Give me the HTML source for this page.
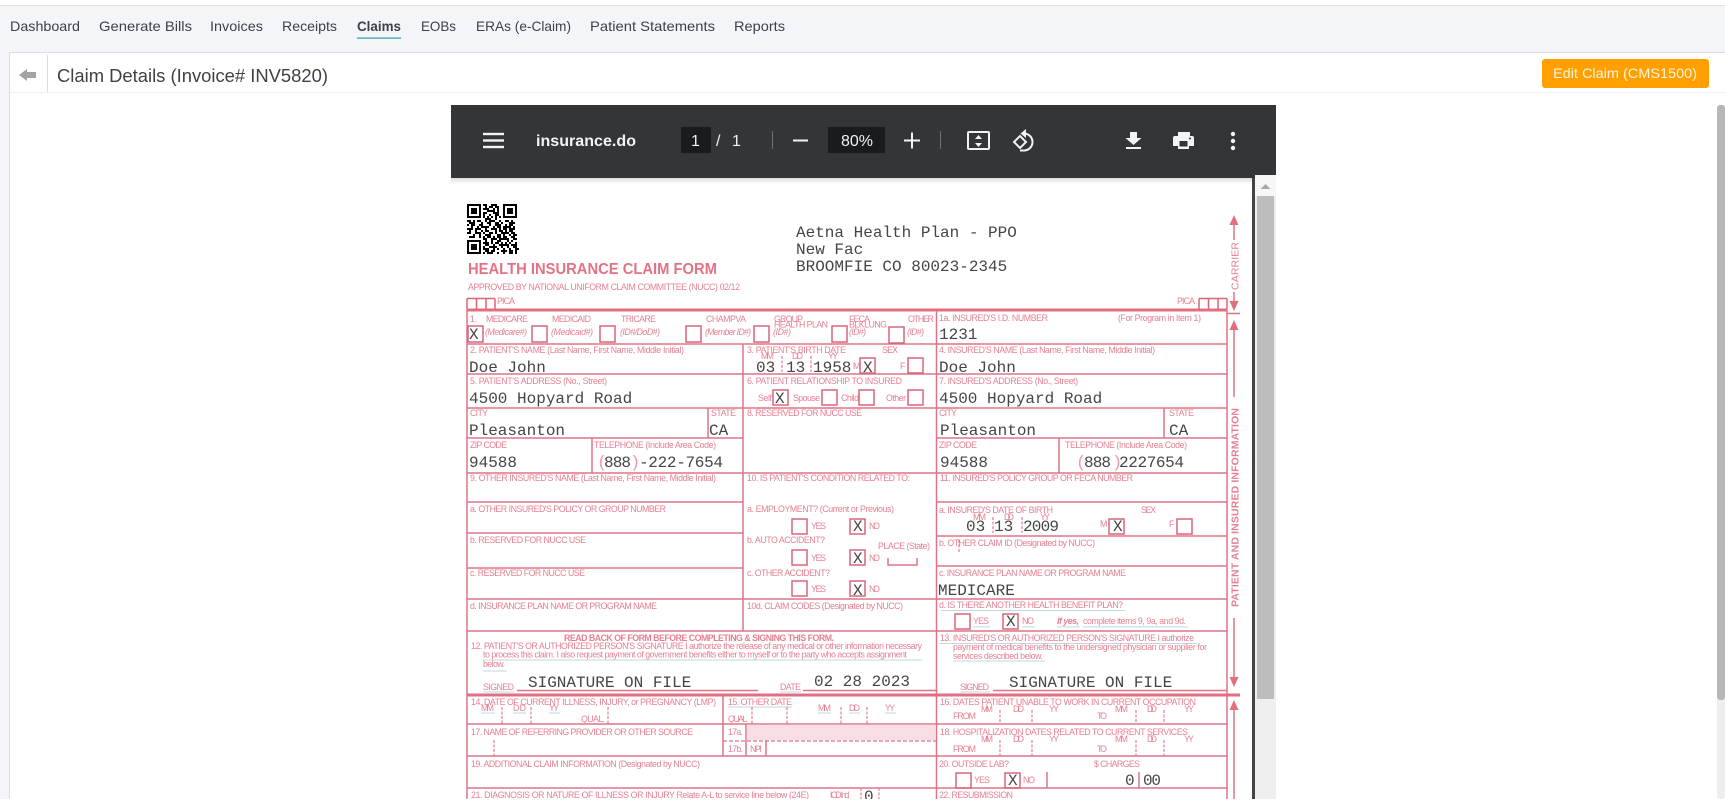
<!DOCTYPE html>
<html lang="en"><head><meta charset="utf-8"><title>Claim Details</title>
<style>
html,body{margin:0;padding:0;background:#fff;width:1725px;height:803px;overflow:hidden}
svg{display:block;position:absolute;left:0;top:0}
.nav text{font:14px "Liberation Sans",sans-serif;fill:#3d4248}
.l text{font:8.8px "Liberation Sans",sans-serif;fill:#e68092}
.t text{font:16px "Liberation Mono",monospace;fill:#454545}
.tb text{font:16px "Liberation Sans",sans-serif;fill:#f1f3f4}
</style></head><body>
<svg width="1725" height="803" viewBox="0 0 1725 803" xmlns="http://www.w3.org/2000/svg">
<defs>
<clipPath id="c"><rect x="440" y="178" width="812" height="621"/></clipPath>
<linearGradient id="sh" x1="0" y1="0" x2="0" y2="1"><stop offset="0" stop-color="#dcdcdc"/><stop offset="1" stop-color="#fff"/></linearGradient>
</defs>
<rect width="1725" height="803" fill="#fff"/>
<rect y="5" width="1725" height="794" fill="#f4f5f9"/>
<rect y="5" width="1725" height="1" fill="#e3e3e3"/>
<g class="nav">
<text x="10" y="31" textLength="70" lengthAdjust="spacingAndGlyphs">Dashboard</text>
<text x="99" y="31" textLength="93" lengthAdjust="spacingAndGlyphs">Generate Bills</text>
<text x="210" y="31" textLength="53" lengthAdjust="spacingAndGlyphs">Invoices</text>
<text x="282" y="31" textLength="55" lengthAdjust="spacingAndGlyphs">Receipts</text>
<text x="357" y="31" textLength="44" lengthAdjust="spacingAndGlyphs" style="font-weight:bold">Claims</text>
<text x="421" y="31" textLength="35" lengthAdjust="spacingAndGlyphs">EOBs</text>
<text x="476" y="31" textLength="95" lengthAdjust="spacingAndGlyphs">ERAs (e-Claim)</text>
<text x="590" y="31" textLength="125" lengthAdjust="spacingAndGlyphs">Patient Statements</text>
<text x="734" y="31" textLength="51" lengthAdjust="spacingAndGlyphs">Reports</text>
</g>
<rect x="357" y="37.5" width="44" height="1.2" fill="#2a9aa5"/>
<!-- card -->
<rect x="9" y="52" width="1716" height="747" fill="#fff"/>
<path d="M9.500 799V52.500H1725" fill="none" stroke="#dedede"/>
<rect x="10" y="92" width="1715" height="1" fill="#efefef"/>
<rect x="47" y="55" width="1" height="37" fill="#dedede"/>
<path d="M19 75l8-6v3h9v6h-9v3z" fill="#a3a3a3"/>
<text x="57" y="82" textLength="271" lengthAdjust="spacingAndGlyphs" style="font:18px 'Liberation Sans',sans-serif;fill:#3d4248">Claim Details (Invoice# INV5820)</text>
<rect x="1542" y="59" width="167" height="29" rx="3" fill="#ffa000"/>
<text x="1553" y="78" textLength="144" lengthAdjust="spacingAndGlyphs" style="font:14px 'Liberation Sans',sans-serif;fill:#fff4dc">Edit Claim (CMS1500)</text>
<!-- outer scrollbar -->
<rect x="1717" y="105" width="8" height="694" rx="3" fill="#eeeeee"/>
<rect x="1717" y="105" width="8" height="595" rx="3" fill="#b7b7b7"/>
<!-- toolbar -->
<rect x="451" y="105" width="825" height="73" fill="#323639"/>
<rect x="451" y="178" width="801" height="6" fill="url(#sh)"/>
<g fill="#f1f3f4">
<rect x="483" y="132.800" width="21" height="2.400"/><rect x="483" y="139.300" width="21" height="2.400"/><rect x="483" y="145.800" width="21" height="2.400"/>
<rect x="793" y="139.500" width="15" height="2"/>
<rect x="904" y="139.500" width="16" height="2"/><rect x="911" y="132.500" width="2" height="16"/>
</g>
<g class="tb">
<text x="536" y="146" textLength="100" style="font-weight:bold">insurance.do</text>
<rect x="681" y="127" width="30" height="26" fill="#191b1c"/>
<text x="691" y="146">1</text>
<text x="716" y="146">/</text>
<text x="732" y="146">1</text>
<rect x="828" y="127" width="57" height="26" fill="#191b1c"/>
<text x="841" y="146" textLength="32">80%</text>
</g>
<rect x="772" y="131" width="1" height="18" fill="#6d7073"/>
<rect x="940" y="131" width="1" height="18" fill="#6d7073"/>
<g fill="none" stroke="#f1f3f4" stroke-width="2">
<rect x="968" y="132" width="21" height="17" rx="1"/>
<path d="M1014 142l6-6 6 6-6 6z"/>
<path d="M1024 133.500A8.500 8.500 0 0 1 1024 150.500H1020"/>
</g>
<g fill="#f1f3f4">
<path d="M975 139l3.500-4 3.500 4zM975 143l3.500 4 3.500-4z"/>
<path d="M1026 129v9l-5.500-4.500z"/>
<path d="M1130 132h7v6h4.500l-8 7-8-7h4.500z"/>
<rect x="1126" y="147" width="15" height="2"/>
<path d="M1178 132h12v4h-12zM1176 136h16a2 2 0 0 1 2 2v8h-5v3h-11v-3h-5v-8a2 2 0 0 1 2-2z"/>
<circle cx="1233" cy="134" r="2.200"/><circle cx="1233" cy="141" r="2.200"/><circle cx="1233" cy="148" r="2.200"/>
</g>
<rect x="1179.500" y="141" width="8" height="5.500" fill="#323639"/>
<circle cx="1190" cy="138.500" r="1" fill="#323639"/>
<!-- pdf scrollbars -->
<rect x="1252" y="178" width="3" height="621" fill="#444"/>
<rect x="1255" y="175" width="21" height="624" fill="#efefef"/>
<rect x="1255" y="175" width="21" height="21" fill="#f7f7f7"/>
<path d="M1260.500 189l5-5 5 5z" fill="#a8a8a8"/>
<rect x="1257" y="196" width="17" height="503" fill="#bdbdbd"/>
<rect x="451" y="184" width="801" height="615" fill="#fff"/>
<!-- form -->
<g clip-path="url(#c)">
<!-- QR -->
<g transform="translate(467,204) scale(2)" fill="none" stroke="#000" stroke-width="1" shape-rendering="crispEdges">
<path d="M.5.5h6v6h-6zM18.500.5h6v6h-6zM.5 18.500h6v6h-6z"/>
<path d="M2 3.500h3M2 2.500h3M2 4.500h3M20 2.500h3M20 3.500h3M20 4.500h3M2 20.500h3M2 21.500h3M2 22.500h3"/>
<path d="M8 .5h2m2 0h3M9 1.500h1m1 0h2m1 0h2M8 2.500h3m2 0h1m1 0h1M10 3.500h4m1 0h1M8 4.500h2m3 0h3M8 5.500h1m2 0h1m2 0h2M8 6.500h1m1 0h1m1 0h1m1 0h1m1 0h1M9 7.500h3m2 0h1"/>
<path d="M0 8.500h2m1 0h1m1 0h2m2 0h1m1 0h3m2 0h1m2 0h2m1 0h1M1 9.500h3m3 0h1m2 0h2m2 0h2m1 0h1m3 0h3M0 10.500h1m1 0h2m2 0h2m3 0h1m2 0h3m2 0h1m1 0h2M2 11.500h1m2 0h1m1 0h4m2 0h1m1 0h2m1 0h4m1 0h1M0 12.500h3m1 0h3m2 0h1m2 0h3m1 0h1m1 0h2m1 0h3M1 13.500h1m2 0h1m2 0h1m1 0h2m3 0h1m1 0h2m1 0h1m1 0h2M0 14.500h2m2 0h3m1 0h1m2 0h2m1 0h1m2 0h4m1 0h2M3 15.500h1m2 0h1m2 0h3m3 0h2m1 0h1m2 0h1m1 0h2M1 16.500h3m2 0h1m1 0h1m1 0h2m1 0h1m1 0h2m1 0h2m2 0h2"/>
<path d="M8 17.500h2m2 0h3m1 0h5m2 0h2M9 18.500h1m2 0h1m2 0h2m3 0h1m1 0h1M8 19.500h3m1 0h1m1 0h2m1 0h1m1 0h1m1 0h1m2 0h1M9 20.500h2m2 0h1m2 0h5m1 0h3M8 21.500h1m2 0h4m2 0h1m2 0h1m2 0h2M8 22.500h3m2 0h1m1 0h1m2 0h1m2 0h1m2 0h2M9 23.500h2m1 0h2m3 0h3m1 0h2m1 0h1M8 24.500h1m1 0h3m2 0h1m2 0h1m2 0h2m1 0h1"/>
</g>
<text x="468" y="274" textLength="249" lengthAdjust="spacingAndGlyphs" style="font:bold 15.500px 'Liberation Sans',sans-serif;fill:#e37284">HEALTH INSURANCE CLAIM FORM</text>
<!-- light underlines -->
<g stroke="#a9cbd8" stroke-width=".8" fill="none">
<path d="M483 660H922M483 671H507M483 692H514M780 692H801M941 610.500H1125M973 627H990M1022 627H1035M1057 627H1080M1083 627H1188M940 643.500H1197M953 661H1045M960 692H990M481 713H495M513 713H526M549 713H560M728 707H792M818 713H831M849 713H860M885 713H896"/>
</g>
<!-- lines -->
<g stroke="#de7587" stroke-width="1.500" fill="none">
<path d="M467 310V799M1227 310V799"/>
<path d="M743 344V631M936.500 310V799"/>
<path d="M467 344H1227M467 374H1227M467 408H1227M467 438H743M936 438H1227M467 473H1227"/>
<path d="M467 502H743M936 502H1227M467 533H743M936 536H1227M467 568H743M936 566H1227M467 599H1227M467 631H1227"/>
<path d="M467 724H1227M467 756H1227M467 788H1227"/>
<path d="M708 408V438M592 438V473M1164 408V438M1059 438V473"/>
<path d="M723 695V756M746 724V756M766 724V756"/>
<path d="M1047 772V788M1139 772V788M888 558V565H917V558"/>
<path d="M517 690.500H758M803 690.500H936M993 690.500H1227"/>
</g>
<path d="M467 310H1227M467 695H1240" stroke="#e16f80" stroke-width="3" fill="none"/>
<rect x="746.800" y="724.800" width="189" height="15.300" fill="#f9dde4"/>
<path d="M723 741H936" stroke="#de7587" stroke-width="1.300" stroke-dasharray="4 2" fill="none"/>
<path d="M782 356V372M811 356V372M993 517V533M1022 517V533M502 707V724M531 707V724M608 707V724M752 707V724M787 707V724M841 707V724M867 707V724M1000 710V723M1032 710V723M1136 710V723M1164 710V723M1000 740V756M1032 740V756M1136 740V756M1164 740V756M494 740V756M959 540V552M861 788V799M879 788V799" stroke="#de7587" stroke-width="1.100" stroke-dasharray="3 1.500" fill="none"/>
<!-- boxes -->
<g stroke="#d8657a" stroke-width="1.500" fill="none">
<path d="M467 298.500h28M467 298.500v11M476.500 298.500v11M486 298.500v11M495 298.500v11M1199 298.500h28M1199 298.500v11M1208.500 298.500v11M1218 298.500v11M1227 298.500v11"/>
<rect x="468" y="326" width="15" height="16"/><rect x="532" y="326" width="15" height="16"/><rect x="600" y="326" width="15" height="16"/><rect x="686" y="326" width="15" height="16"/><rect x="754" y="326" width="15" height="16"/><rect x="832" y="326" width="15" height="16"/><rect x="889" y="327" width="15" height="16"/>
<rect x="860" y="358" width="15" height="15"/><rect x="908" y="358" width="15" height="15"/>
<rect x="773" y="390" width="15" height="15"/><rect x="822" y="390" width="15" height="15"/><rect x="859" y="390" width="15" height="15"/><rect x="908" y="390" width="15" height="15"/>
<rect x="792" y="519" width="15" height="15"/><rect x="850" y="519" width="15" height="15"/>
<rect x="792" y="550" width="15" height="15"/><rect x="850" y="550" width="15" height="15"/>
<rect x="792" y="581" width="15" height="15"/><rect x="850" y="581" width="15" height="15"/>
<rect x="1109" y="519" width="15" height="15"/><rect x="1177" y="519" width="15" height="15"/>
<rect x="955" y="614" width="15" height="15"/><rect x="1003" y="614" width="15" height="15"/>
<rect x="956" y="773" width="15" height="15"/><rect x="1005" y="773" width="15" height="15"/>
</g>
<!-- side arrows -->
<g stroke="#de7587" stroke-width="1.500" fill="none">
<path d="M1234 220V240M1234 292V306M1234 325V397M1234 618V682M1234 705V799M1227 313.500H1240"/>
</g>
<g fill="#e16f80">
<path d="M1234 215l4.500 10h-9zM1234 311l4.500-10h-9zM1234 320l4.500 10h-9zM1234 687l4.500-10h-9zM1234 700l4.500 10h-9z"/>
</g>
<g class="l">
<text transform="translate(1238.500,290) rotate(-90)" textLength="48" style="font-size:10.500px">CARRIER</text>
<text transform="translate(1238.500,607) rotate(-90)" textLength="199" style="font-size:10.500px;font-weight:bold">PATIENT AND INSURED INFORMATION</text>
<text x="468" y="290" textLength="272">APPROVED BY NATIONAL UNIFORM CLAIM COMMITTEE (NUCC) 02/12</text>
<text x="497" y="304" textLength="18">PICA</text><text x="1177" y="304" textLength="18">PICA</text>
<text x="470" y="322">1.</text><text x="486" y="322" textLength="42">MEDICARE</text><text x="552" y="322" textLength="39">MEDICAID</text><text x="621" y="322" textLength="35">TRICARE</text><text x="706" y="322" textLength="40">CHAMPVA</text><text x="774" y="322" textLength="29">GROUP</text><text x="774" y="327.500" textLength="54">HEALTH PLAN</text><text x="849" y="322" textLength="21">FECA</text><text x="849" y="327.500" textLength="38">BLKLUNG</text><text x="908" y="322" textLength="26">OTHER</text>
<g font-style="italic">
<text x="485" y="335" textLength="42" style="font-style:italic">(Medicare#)</text><text x="551" y="335" textLength="42" style="font-style:italic">(Medicaid#)</text><text x="620" y="335" textLength="40" style="font-style:italic">(ID#/DoD#)</text><text x="705" y="335" textLength="46" style="font-style:italic">(Member ID#)</text><text x="773" y="335" textLength="18" style="font-style:italic">(ID#)</text><text x="849" y="335" textLength="17" style="font-style:italic">(ID#)</text><text x="907" y="335" textLength="17" style="font-style:italic">(ID#)</text>
</g>
<text x="939" y="321" textLength="109">1a. INSURED'S I.D. NUMBER</text><text x="1118" y="321" textLength="83">(For Program in Item 1)</text>
<text x="470" y="353" textLength="214">2. PATIENT'S NAME (Last Name, First Name, Middle Initial)</text>
<text x="747" y="353" textLength="99">3. PATIENT'S BIRTH DATE</text><text x="882" y="353" textLength="16">SEX</text>
<text x="761" y="359" textLength="13">MM</text><text x="792" y="359" textLength="11">DD</text><text x="828" y="359" textLength="10">YY</text>
<text x="853" y="369">M</text><text x="900" y="369">F</text>
<text x="939" y="353" textLength="216">4. INSURED'S NAME (Last Name, First Name, Middle Initial)</text>
<text x="470" y="384" textLength="137">5. PATIENT'S ADDRESS (No., Street)</text><text x="747" y="384" textLength="155">6. PATIENT RELATIONSHIP TO INSURED</text><text x="939" y="384" textLength="139">7. INSURED'S ADDRESS (No., Street)</text>
<text x="758" y="401" textLength="14">Self</text><text x="793" y="401" textLength="27">Spouse</text><text x="841" y="401" textLength="18">Child</text><text x="886" y="401" textLength="20">Other</text>
<text x="470" y="416" textLength="18">CITY</text><text x="711" y="416" textLength="25">STATE</text><text x="747" y="416" textLength="115">8. RESERVED FOR NUCC USE</text><text x="939" y="416" textLength="18">CITY</text><text x="1169" y="416" textLength="25">STATE</text>
<text x="470" y="448" textLength="37">ZIP CODE</text><text x="594" y="448" textLength="122">TELEPHONE (Include Area Code)</text><text x="939" y="448" textLength="38">ZIP CODE</text><text x="1065" y="448" textLength="122">TELEPHONE (Include Area Code)</text>
<text x="470" y="481" textLength="246">9. OTHER INSURED'S NAME (Last Name, First Name, Middle Initial)</text><text x="747" y="481" textLength="163">10. IS PATIENT'S CONDITION RELATED TO:</text><text x="940" y="481" textLength="193">11. INSURED'S POLICY GROUP OR FECA NUMBER</text>
<text x="470" y="512" textLength="196">a. OTHER INSURED'S POLICY OR GROUP NUMBER</text><text x="747" y="512" textLength="147">a. EMPLOYMENT? (Current or Previous)</text><text x="939" y="513" textLength="114">a. INSURED'S DATE OF BIRTH</text><text x="1141" y="513" textLength="15">SEX</text>
<text x="973" y="520" textLength="13">MM</text><text x="1004" y="520" textLength="10">DD</text><text x="1040" y="520" textLength="10">YY</text>
<text x="1100" y="527">M</text><text x="1169" y="527">F</text>
<text x="811" y="529" textLength="15">YES</text><text x="869" y="529" textLength="11">NO</text>
<text x="470" y="543" textLength="116">b. RESERVED FOR NUCC USE</text><text x="747" y="543" textLength="78">b. AUTO ACCIDENT?</text><text x="939" y="546" textLength="156">b. OTHER CLAIM ID (Designated by NUCC)</text>
<text x="878" y="549" textLength="52">PLACE (State)</text>
<text x="811" y="561" textLength="15">YES</text><text x="869" y="561" textLength="11">NO</text>
<text x="470" y="576" textLength="115">c. RESERVED FOR NUCC USE</text><text x="747" y="576" textLength="83">c. OTHER ACCIDENT?</text><text x="939" y="576" textLength="187">c. INSURANCE PLAN NAME OR PROGRAM NAME</text>
<text x="811" y="592" textLength="15">YES</text><text x="869" y="592" textLength="11">NO</text>
<text x="470" y="609" textLength="187">d. INSURANCE PLAN NAME OR PROGRAM NAME</text><text x="747" y="609" textLength="156">10d. CLAIM CODES (Designated by NUCC)</text><text x="939" y="608" textLength="184">d. IS THERE ANOTHER HEALTH BENEFIT PLAN?</text>
<text x="973" y="624" textLength="16">YES</text><text x="1022" y="624" textLength="12">NO</text><text x="1057" y="624" textLength="22" style="font-weight:bold;font-style:italic">If yes,</text><text x="1083" y="624" textLength="103">complete items 9, 9a, and 9d.</text>
<text x="564" y="641" textLength="270" style="font-weight:bold">READ BACK OF FORM BEFORE COMPLETING &amp; SIGNING THIS FORM.</text>
<text x="471" y="649" textLength="451">12. PATIENT'S OR AUTHORIZED PERSON'S SIGNATURE  I authorize the release of any medical or other information necessary</text>
<text x="483" y="657.500" textLength="424">to process this claim. I also request payment of government benefits either to myself or to the party who accepts assignment</text>
<text x="483" y="667" textLength="22">below.</text>
<text x="483" y="690" textLength="31">SIGNED</text><text x="780" y="690" textLength="21">DATE</text>
<text x="940" y="641" textLength="254">13. INSURED'S OR AUTHORIZED PERSON'S SIGNATURE I authorize</text>
<text x="953" y="650" textLength="254">payment of medical benefits to the undersigned physician or supplier for</text>
<text x="953" y="659" textLength="90">services described below.</text>
<text x="960" y="690" textLength="29">SIGNED</text>
<text x="471" y="705" textLength="245">14. DATE OF CURRENT ILLNESS, INJURY, or PREGNANCY (LMP)</text>
<text x="728" y="705" textLength="64">15. OTHER DATE</text>
<text x="481" y="711" textLength="13">MM</text><text x="513" y="711" textLength="13">DD</text><text x="549" y="711" textLength="10">YY</text><text x="581" y="722" textLength="24">QUAL.</text><text x="728" y="722" textLength="20">QUAL.</text><text x="818" y="711" textLength="13">MM</text><text x="849" y="711" textLength="11">DD</text><text x="885" y="711" textLength="10">YY</text>
<text x="940" y="705" textLength="256">16. DATES PATIENT UNABLE TO WORK IN CURRENT OCCUPATION</text>
<text x="981" y="712" textLength="12">MM</text><text x="1013" y="712" textLength="11">DD</text><text x="1049" y="712" textLength="10">YY</text><text x="1115" y="712" textLength="13">MM</text><text x="1147" y="712" textLength="10">DD</text><text x="1184" y="712" textLength="10">YY</text>
<text x="953" y="719" textLength="23">FROM</text><text x="1097" y="719" textLength="10">TO</text>
<text x="471" y="735" textLength="222">17. NAME OF REFERRING PROVIDER OR OTHER SOURCE</text>
<text x="728" y="735" textLength="15">17a.</text><text x="728" y="752" textLength="15">17b.</text><text x="750" y="752" textLength="12">NPI</text>
<text x="940" y="735" textLength="248">18. HOSPITALIZATION DATES RELATED TO CURRENT SERVICES</text>
<text x="981" y="742" textLength="12">MM</text><text x="1013" y="742" textLength="11">DD</text><text x="1049" y="742" textLength="10">YY</text><text x="1115" y="742" textLength="13">MM</text><text x="1147" y="742" textLength="10">DD</text><text x="1184" y="742" textLength="10">YY</text>
<text x="953" y="752" textLength="23">FROM</text><text x="1097" y="752" textLength="10">TO</text>
<text x="471" y="767" textLength="229">19. ADDITIONAL CLAIM INFORMATION (Designated by NUCC)</text>
<text x="939" y="767" textLength="70">20. OUTSIDE LAB?</text><text x="1094" y="767" textLength="46">$ CHARGES</text>
<text x="974" y="783" textLength="16">YES</text><text x="1023" y="783" textLength="12">NO</text>
<text x="471" y="798" textLength="338">21. DIAGNOSIS OR NATURE OF ILLNESS OR INJURY  Relate A-L to service line below (24E)</text>
<text x="830" y="798" textLength="20">ICD Ind.</text>
<text x="939" y="798" textLength="74">22. RESUBMISSION</text>
</g>
<g class="t">
<text x="796" y="237">Aetna Health Plan - PPO</text>
<text x="796" y="254">New Fac</text>
<text x="796" y="271">BROOMFIE CO 80023-2345</text>
<text x="469" y="339">X</text>
<text x="939" y="339">1231</text>
<text x="469" y="372">Doe John</text>
<text x="756" y="372">03</text><text x="786" y="372">13</text><text x="813" y="372">1958</text>
<text x="863" y="372">X</text>
<text x="939" y="372">Doe John</text>
<text x="469" y="403">4500 Hopyard Road</text>
<text x="775" y="403">X</text>
<text x="939" y="403">4500 Hopyard Road</text>
<text x="469" y="435">Pleasanton</text><text x="709" y="435">CA</text>
<text x="940" y="435">Pleasanton</text><text x="1169" y="435">CA</text>
<text x="469" y="467">94588</text>
<text x="940" y="467">94588</text>
<text x="604" y="467" textLength="27">888</text><text x="639" y="467" textLength="84">-222-7654</text>
<text x="1084" y="467" textLength="27">888</text><text x="1119" y="467" textLength="65">2227654</text>
<text x="853" y="531">X</text><text x="853" y="563">X</text><text x="853" y="595">X</text>
<text x="966" y="531">03</text><text x="994" y="531">13</text><text x="1023" y="531" textLength="36">2009</text>
<text x="1113" y="531">X</text>
<text x="938" y="595">MEDICARE</text>
<text x="1006" y="626">X</text>
<text x="528" y="687">SIGNATURE ON FILE</text>
<text x="814" y="686">02 28 2023</text>
<text x="1009" y="687">SIGNATURE ON FILE</text>
<text x="1008" y="785">X</text>
<text x="1125" y="785">0</text><text x="1143" y="785" textLength="18">00</text>
<text x="864" y="801">0</text>
</g>
<g style="font:17px 'Liberation Mono',monospace;fill:#ec9aa6">
<text x="597" y="467">(</text><text x="630" y="467">)</text><text x="1076" y="467">(</text><text x="1112" y="467">)</text>
</g>
</g>
</svg>
</body></html>
